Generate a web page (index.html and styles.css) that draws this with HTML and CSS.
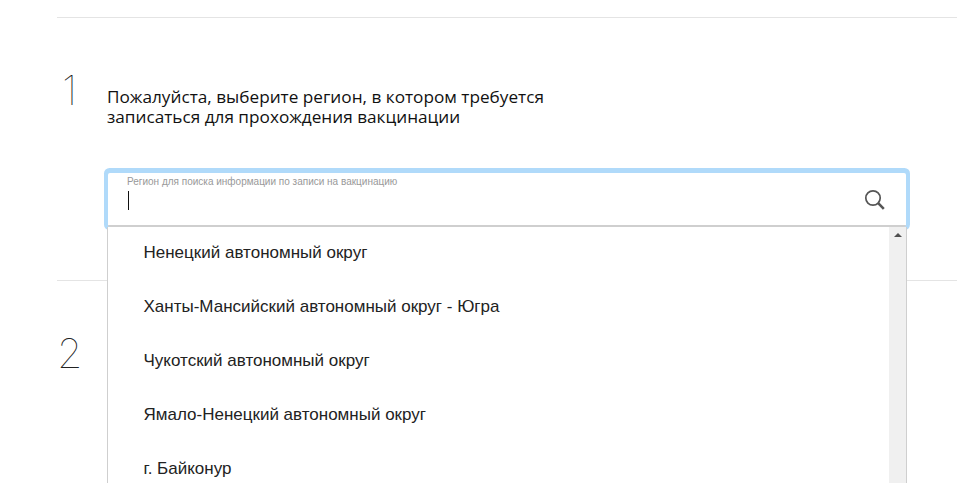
FILE: index.html
```html
<!DOCTYPE html>
<html lang="ru">
<head>
	<meta charset="UTF-8">
	<title>Запись на вакцинацию</title>
	<link rel="stylesheet" href="styles.css">
</head>
<body>
	<main class="steps">
		<section class="step step-first">
			<div class="step-number">1</div>
			<div class="step-body">
				<h2 class="step-title">Пожалуйста, выберите регион, в котором требуется<br>записаться для прохождения вакцинации</h2>
				<div class="search">
					<div class="search-field">
						<label class="search-label">Регион для поиска информации по записи на вакцинацию</label>
						<span class="caret"></span>
					</div>
					<svg class="search-icon" width="22" height="22" viewBox="0 0 22 22" fill="none" stroke="#555">
						<circle cx="9" cy="9" r="7.2" stroke-width="1.7"/>
						<path d="M14.2 14.2l5.6 5.6" stroke-width="2.6"/>
					</svg>
					<div class="dropdown">
						<ul class="region-list">
							<li>Ненецкий автономный округ</li>
							<li>Ханты-Мансийский автономный округ - Югра</li>
							<li>Чукотский автономный округ</li>
							<li>Ямало-Ненецкий автономный округ</li>
							<li>г. Байконур</li>
						</ul>
						<div class="scrollbar"><span class="scroll-up"></span></div>
					</div>
				</div>
			</div>
		</section>
		<section class="step">
			<div class="step-number">2</div>
		</section>
	</main>
</body>
</html>
```

FILE: styles.css
```css
html, body{
	margin: 0;
	height: 483px;
	overflow: hidden;
	background: #fff;
}
body{
	font-family: "Liberation Sans", Arial, sans-serif;
	color: #222;
}
.steps{
	margin: 17px 10px 0 57px;
}
.step{
	display: flex;
	border-top: 1px solid #e4e4e4;
	height: 262px;
}
.step:last-child{
	height: 185px;
}
.step-number{
	box-sizing: border-box;
	width: 50px;
	padding-top: 46px;
	font-family: "Inter", sans-serif;
	font-weight: 100;
	font-size: 41px;
	line-height: 52px;
	color: #222;
}
.step-first .step-number{
	padding-left: 5px;
}
.step-body{
	flex: 1;
}
.step-title{
	margin: 69px 0 0;
	font-family: "Open Sans", sans-serif;
	font-weight: 400;
	font-size: 17.2px;
	line-height: 20px;
	color: #111;
}
.search{
	position: relative;
	z-index: 2;
	box-sizing: border-box;
	height: 54px;
	width: 798px;
	margin: 46px 0 0 1px;
	border-bottom: 2px solid #cfcfcf;
	border-radius: 2px;
	background: #fff;
	box-shadow: 0 -1px 0 4px #b0dafa;
}
.search-field{
	padding: 3px 0 0 19px;
}
.search-label{
	display: block;
	font-size: 10px;
	line-height: 12px;
	color: #999;
}
.caret{
	display: block;
	width: 1px;
	height: 19px;
	margin: 3px 0 0 1px;
	background: #111;
}
.search-icon{
	position: absolute;
	top: 16px;
	right: 20px;
}
.dropdown{
	position: absolute;
	top: 54px;
	left: -1px;
	display: flex;
	width: 800px;
	height: 256px;
	box-sizing: border-box;
	overflow: hidden;
	border-left: 1px solid #cfcfcf;
	border-right: 1px solid #cfcfcf;
	background: #fff;
}
.region-list{
	flex: 1;
	list-style: none;
	margin: 0;
	padding: 0 0 0 35.5px;
	font-size: 17px;
}
.region-list li{
	height: 54px;
	line-height: 51px;
}
.scrollbar{
	width: 17px;
	background: #f0f0f0;
}
.scroll-up{
	display: block;
	width: 0;
	margin: 6px auto 0;
	border-left: 4px solid transparent;
	border-right: 4px solid transparent;
	border-bottom: 4px solid #505050;
}
```
